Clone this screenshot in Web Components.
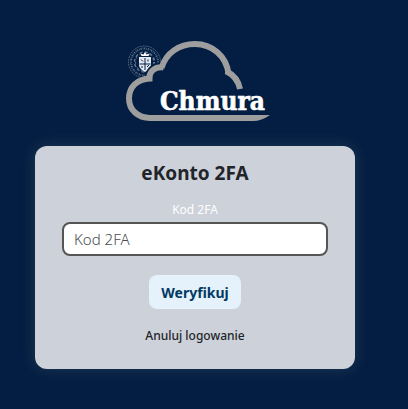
<!DOCTYPE html>
<html lang="pl">
<head>
<meta charset="utf-8">
<meta name="viewport" content="width=device-width, initial-scale=1">
<title>eKonto 2FA</title>
<style>
	body {
		margin: 0;
		min-height: 100vh;
		background-color: #031e42;
		font-family: "Noto Sans", "Open Sans", sans-serif;
		color: #212529;
	}
</style>
</head>
<body>
<login-page>
	<cloud-logo slot="logo"></cloud-logo>
	<login-card heading="eKonto 2FA">
		<code-field label="Kod 2FA"></code-field>
		<submit-button>Weryfikuj</submit-button>
		<cancel-link href="#logout">Anuluj logowanie</cancel-link>
	</login-card>
</login-page>

<script>
function makeTemplate(html) {
	const template = document.createElement('template');
	template.innerHTML = html;
	return template;
}

class BaseElement extends HTMLElement {
	constructor() {
		super();
		this.attachShadow({ mode: 'open' });
		this.shadowRoot.appendChild(this.constructor.template.content.cloneNode(true));
	}
}

class LoginPage extends BaseElement {
	static template = makeTemplate(`
<style>
	:host {
		display: block;
		padding: 38px 18px 40px 0;
	}

	main {
		display: flex;
		flex-direction: column;
		align-items: center;
		gap: 22px;
	}
</style>
<main>
	<slot name="logo"></slot>
	<slot></slot>
</main>
`);
}
customElements.define('login-page', LoginPage);


class CloudLogo extends BaseElement {
	static template = makeTemplate(`
<style>
	:host {
		display: block;
	}

	svg {
		display: block;
		width: 152px;
		height: 86px;
	}

	.word {
		font: bold 26px "DejaVu Serif Condensed", "DejaVu Serif", serif;
		fill: #ffffff;
		stroke: #ffffff;
		stroke-width: 0.6px;
	}
</style>
<svg viewBox="0 0 152 86" role="img" aria-label="Chmura">
	<!-- seal -->
	<g fill="none" stroke="#aebccd">
		<circle cx="25.500" cy="24" r="16" stroke-width="0.5" stroke-dasharray="2 0.7" opacity="0.8"/>
		<circle cx="25.500" cy="24" r="13.500" stroke-width="2" stroke-dasharray="1 1.2 0.6 0.9" opacity="0.6"/>
		<circle cx="25.500" cy="24" r="10" stroke-width="1.300" stroke-dasharray="3 2.240" opacity="0.6"/>
		<circle cx="25.500" cy="24" r="9" stroke-width="0.6" stroke-dasharray="2.240 3" opacity="0.8"/>
	</g>
	<path d="M20 19h12v8c0 3-3 5-6 7-3-2-6-4-6-7z" fill="#e3e9f0"/>
	<path d="M22.500 18l-1-2.500 3 1L26 14l1.500 2.500 3-1-1 2.500z" fill="#ffffff"/>
	<path d="M26 20v12M20.500 26h11M22 21.500l2 2M28 29l2-2M29 21.500v2M23 28v2" fill="none" stroke="#031e42" stroke-width="1"/>
	<!-- cloud -->
	<path d="M25 40C27 31 32 25 41 24L46 31 36 43 20 52 8 60C9 48 15 41 25 40z" fill="#031e42"/>
	<g fill="none" stroke="#9e9e9e" stroke-width="6">
		<path d="M121 51C119.500 43 115 37 107 33"/>
		<path d="M109.500 36C107.500 18 93 6 76 6C60 6 47 15 42.500 30"/>
		<path d="M44.500 29.500C36 28.500 30 33 30 42"/>
		<path d="M33.500 40.500H31C18 41 10 49 10 60.500C10 72 19 80 31 80"/>
	</g>
	<path d="M30 77H151C145 81 140 83 134 83H30z" fill="#9e9e9e"/>
	<text class="word" x="41" y="72">Chmura</text>
</svg>
`);
}
customElements.define('cloud-logo', CloudLogo);


class LoginCard extends BaseElement {
	static template = makeTemplate(`
<style>
	:host {
		display: block;
		box-sizing: border-box;
		width: 100%;
		max-width: 320px;
		padding: 14px 27px 24px;
		border-radius: 12px;
		background-color: #cdd1d9;
		box-shadow: 0 0 16px rgba(205, 209, 190, 0.15);
	}

	h1 {
		margin: 0 0 15px;
		font-size: 19px;
		line-height: 26px;
		font-weight: 700;
		text-align: center;
	}

	form {
		display: flex;
		flex-direction: column;
		align-items: center;
	}
</style>
<h1></h1>
<form>
	<slot></slot>
</form>
`);

	static get observedAttributes() {
		return ['heading'];
	}

	attributeChangedCallback(name, oldValue, newValue) {
		this.shadowRoot.querySelector('h1').textContent = newValue;
	}
}
customElements.define('login-card', LoginCard);


class CodeField extends BaseElement {
	static template = makeTemplate(`
<style>
	:host {
		display: block;
		width: 100%;
		margin-bottom: 19px;
	}

	label {
		display: block;
		margin-bottom: 3px;
		font-size: 12px;
		line-height: 18px;
		text-align: center;
		color: #ffffff;
	}

	input {
		display: block;
		box-sizing: border-box;
		width: 100%;
		height: 34px;
		padding: 0 10px;
		border: 2px solid #555555;
		border-radius: 8px;
		background-color: #ffffff;
		font-family: inherit;
		font-size: 15px;
		font-weight: 300;
		color: #212529;
	}

	input::placeholder {
		color: #494c50;
		opacity: 1;
	}
</style>
<label for="code"></label>
<input id="code" type="text" autocomplete="one-time-code">
`);

	static get observedAttributes() {
		return ['label'];
	}

	attributeChangedCallback(name, oldValue, newValue) {
		this.shadowRoot.querySelector('label').textContent = newValue;
		this.shadowRoot.querySelector('input').placeholder = newValue;
	}
}
customElements.define('code-field', CodeField);


class SubmitButton extends BaseElement {
	static template = makeTemplate(`
<style>
	:host {
		display: block;
		margin-bottom: 18px;
	}

	button {
		display: block;
		height: 34px;
		padding: 0 12px;
		border: none;
		border-radius: 8px;
		background-color: #e5f1fb;
		font-family: inherit;
		font-size: 14px;
		font-weight: 700;
		color: #003a63;
		cursor: pointer;
	}
</style>
<button type="button"><slot></slot></button>
`);
}
customElements.define('submit-button', SubmitButton);


class CancelLink extends BaseElement {
	static template = makeTemplate(`
<style>
	:host {
		display: block;
		font-size: 12px;
		line-height: 18px;
		font-weight: 500;
	}

	a {
		color: inherit;
		text-decoration: none;
	}
</style>
<a><slot></slot></a>
`);

	static get observedAttributes() {
		return ['href'];
	}

	attributeChangedCallback(name, oldValue, newValue) {
		this.shadowRoot.querySelector('a').href = newValue;
	}
}
customElements.define('cancel-link', CancelLink);
</script>
</body>
</html>
